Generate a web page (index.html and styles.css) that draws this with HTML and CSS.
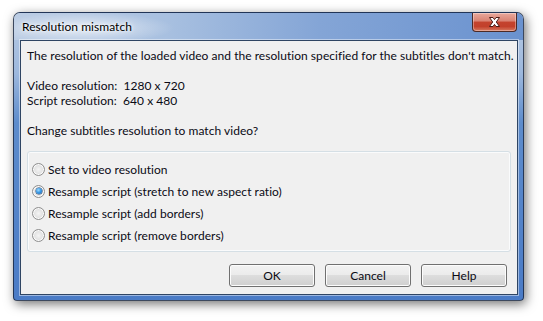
FILE: index.html
```html
<!DOCTYPE html>
<html>
<head>
<meta charset="utf-8">
<link rel="stylesheet" href="styles.css">
</head>
<body>
<div class="desk">
  <div class="window">
    <div class="titlebar">
      <span class="title">Resolution mismatch</span>
      <div class="close">
        <svg width="17" height="12" viewBox="0 0 17 12">
          <path d="M3.5 1.5 H7 L8.5 3.6 L10 1.5 H13.5 L10.3 6 L13.5 10.5 H10 L8.5 8.4 L7 10.5 H3.5 L6.7 6 Z" fill="#fff" stroke="#4a1a14" stroke-width="1" stroke-linejoin="round"/>
        </svg>
      </div>
    </div>
    <div class="client">
      <div class="msg">
        <p>The resolution of the loaded video and the resolution specified for the subtitles don't match.</p>
        <p>Video resolution:&nbsp; 1280 x 720<br>Script resolution:&nbsp; 640 x 480</p>
        <p>Change subtitles resolution to match video?</p>
      </div>
      <div class="group">
        <div class="radio"><span class="dot"></span><span>Set to video resolution</span></div>
        <div class="radio"><span class="dot on"></span><span>Resample script (stretch to new aspect ratio)</span></div>
        <div class="radio"><span class="dot"></span><span>Resample script (add borders)</span></div>
        <div class="radio"><span class="dot"></span><span>Resample script (remove borders)</span></div>
      </div>
      <div class="buttons">
        <div class="btn">OK</div>
        <div class="btn">Cancel</div>
        <div class="btn">Help</div>
      </div>
    </div>
  </div>
</div>
</body>
</html>
```
FILE: styles.css
```css
html, body {
  margin: 0;
  padding: 0;
  background: #ffffff;
}
body {
  width: 543px;
  height: 321px;
  overflow: hidden;
  font-family: "Lato", "Noto Sans", sans-serif;
  font-size: 12px;
  letter-spacing: 0.04px;
  color: #0a0a14;
}
.desk {
  padding: 12px 0 0 13px;
}
.window {
  box-sizing: border-box;
  width: 511px;
  height: 289px;
  border: 1px solid rgba(20, 30, 50, 0.75);
  border-radius: 7px 7px 4px 4px;
  background: linear-gradient(to bottom, #b9cbe3 0px, #9db8dd 60px, #5d8ccc 110px, #4a7bc6 289px);
  box-shadow: 2px 3px 11px rgba(0, 0, 0, 0.55);
  padding: 0 5px 5px 6px;
  display: flex;
  flex-direction: column;
}
.titlebar {
  height: 27px;
  margin: 0 -5px 0 -6px;
  padding: 0 6px 0 8px;
  border-radius: 6px 6px 0 0;
  background:
    radial-gradient(ellipse 90px 16px at 70px 15px, rgba(255,255,255,0.65), rgba(255,255,255,0) 100%),
    linear-gradient(to right, #bccde4 0%, #a8c0e0 30%, #84a5d6 60%, #6a92cf 100%);
  display: flex;
  align-items: flex-start;
  justify-content: space-between;
}
.title {
  margin-top: 6px;
  line-height: 15px;
  color: #000;
  white-space: nowrap;
  text-shadow: 0 0 6px #fff, 0 0 3px #fff;
}
.close {
  box-sizing: border-box;
  width: 45px;
  height: 19px;
  border: 1px solid #4c2a26;
  border-top: none;
  border-radius: 0 0 4px 4px;
  background: linear-gradient(to bottom, #e9a99c 0%, #d98272 45%, #c4432e 50%, #c2402b 75%, #d77a60 100%);
  box-shadow: inset 0 0 0 1px rgba(255,255,255,0.35);
  display: flex;
  align-items: center;
  justify-content: center;
}
.close svg {
  display: block;
}
.client {
  box-sizing: border-box;
  height: 255px;
  background: #f0f0f0;
  border: 1px solid #2f4563;
  box-shadow: 0 0 0 1px rgba(255,255,255,0.45);
  display: flex;
  flex-direction: column;
}
.msg {
  padding: 7px 0 0 6px;
  line-height: 15px;
  white-space: nowrap;
}
.msg p {
  margin: 0 0 15px 0;
}
.msg p:last-child {
  margin-bottom: 0;
}
.group {
  box-sizing: border-box;
  margin: 13px 6px 0 6px;
  height: 101px;
  border: 1px solid #d5dfe5;
  border-radius: 3px;
  box-shadow: inset 0 0 0 1px #fafbfc;
  padding: 6px 0 0 4px;
}
.radio {
  height: 22px;
  display: flex;
  align-items: center;
  gap: 3px;
  white-space: nowrap;
}
.dot {
  box-sizing: border-box;
  width: 13px;
  height: 13px;
  border-radius: 50%;
  border: 1px solid #8f8f8f;
  background: radial-gradient(circle at 50% 50%, #f4f4f4 0%, #e2e2e2 55%, #d0d0d0 100%);
  box-shadow: inset 0 0 0 1px #fcfcfc;
  position: relative;
}
.dot.on::after {
  content: "";
  position: absolute;
  left: 2.5px;
  top: 2.5px;
  width: 6px;
  height: 6px;
  border-radius: 50%;
  background: radial-gradient(circle at 40% 35%, #9fdcff 0%, #3a9ae6 45%, #135fb0 100%);
  box-shadow: 0 0 0 0.5px #1b3f6e;
}
.buttons {
  margin-top: 12px;
  padding-right: 10px;
  display: flex;
  justify-content: flex-end;
  gap: 10px;
}
.btn {
  box-sizing: border-box;
  width: 86px;
  height: 23px;
  border: 1px solid #707070;
  border-radius: 3px;
  background: linear-gradient(to bottom, #f2f2f2 0%, #ebebeb 50%, #dddddd 50%, #cfcfcf 100%);
  box-shadow: inset 0 0 0 1px #fcfcfc;
  display: flex;
  align-items: center;
  justify-content: center;
  line-height: 15px;
}
```
